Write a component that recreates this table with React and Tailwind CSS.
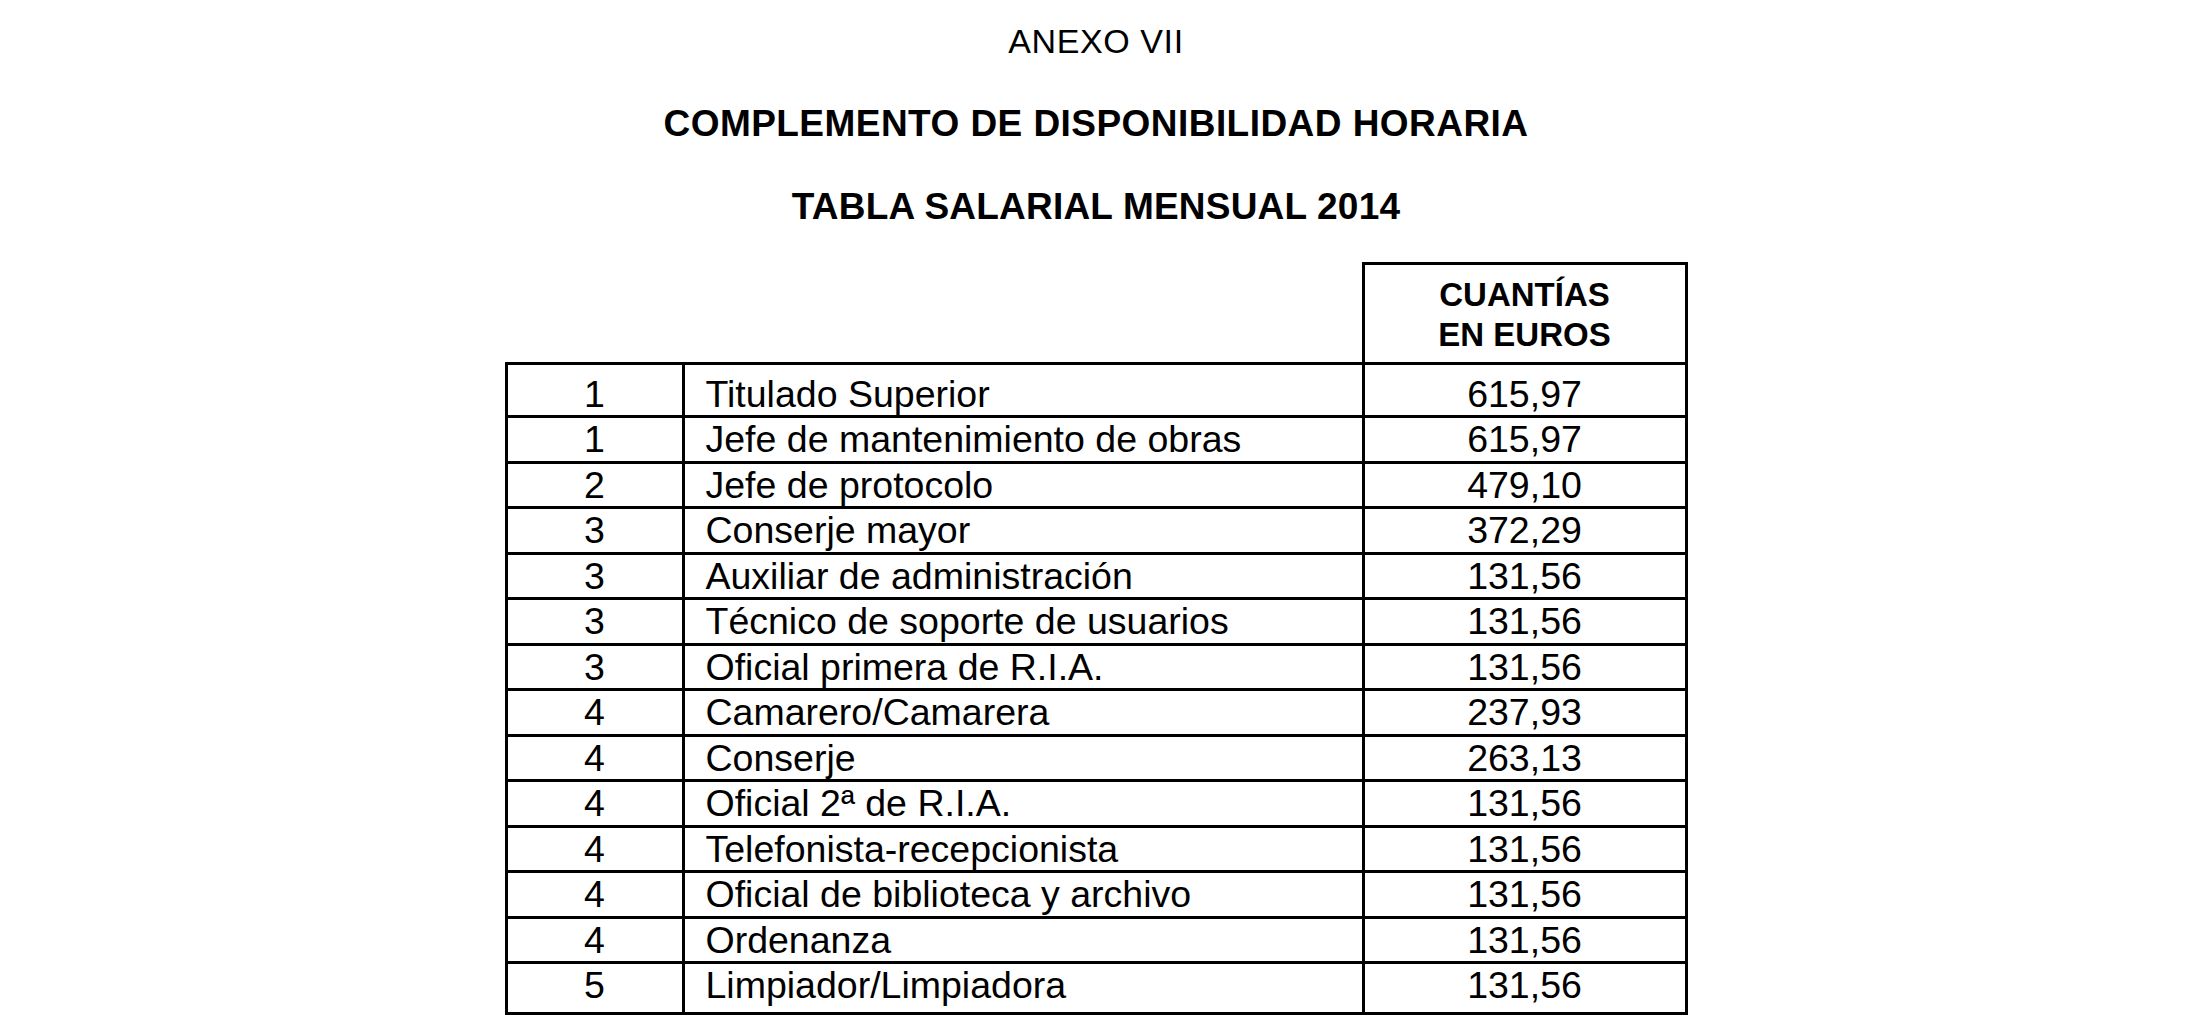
import React from "react";

const rows = [
  ["1", "Titulado Superior", "615,97"],
  ["1", "Jefe de mantenimiento de obras", "615,97"],
  ["2", "Jefe de protocolo", "479,10"],
  ["3", "Conserje mayor", "372,29"],
  ["3", "Auxiliar de administración", "131,56"],
  ["3", "Técnico de soporte de usuarios", "131,56"],
  ["3", "Oficial primera de R.I.A.", "131,56"],
  ["4", "Camarero/Camarera", "237,93"],
  ["4", "Conserje", "263,13"],
  ["4", "Oficial 2ª de R.I.A.", "131,56"],
  ["4", "Telefonista-recepcionista", "131,56"],
  ["4", "Oficial de biblioteca y archivo", "131,56"],
  ["4", "Ordenanza", "131,56"],
  ["5", "Limpiador/Limpiadora", "131,56"],
];

export default function App() {
  return (
    <div className="w-[2192px] h-[1032px] bg-white text-black font-['Liberation_Sans',Arial,sans-serif] overflow-hidden">
      <div className="pt-[24px] flex flex-col items-center">
        <h1 className="text-[34px] leading-[34px] tracking-[0.6px] font-normal">ANEXO VII</h1>
        <h2 className="mt-[46.7px] text-[37px] leading-[37px] tracking-[0.45px] font-bold">
          COMPLEMENTO DE DISPONIBILIDAD HORARIA
        </h2>
        <h2 className="mt-[46px] text-[37px] leading-[37px] tracking-[0.2px] font-bold">
          TABLA SALARIAL MENSUAL 2014
        </h2>
      </div>

      <div className="mx-auto mt-[37.3px] w-[1183px]">
        <div className="flex">
          <div className="w-[857px]" />
          <div className="w-[326px] h-[100px] border-t-[3px] border-x-[3px] border-black pt-[10.5px] flex flex-col items-center text-[33px] leading-[40px] font-bold">
            <span>CUANTÍAS</span>
            <span>EN EUROS</span>
          </div>
        </div>
        <div className="border-[3px] border-black">
          {rows.map(([g, name, v], i) => {
            const first = i === 0;
            const last = i === rows.length - 1;
            return (
              <div
                key={i}
                className={
                  "flex text-[37.5px] leading-[42.5px] " +
                  (last ? "" : "border-b-[3px] border-black ")
                }
              >
                <div className={"w-[174px] text-center " + (first ? "pt-[8px] " : "") + (last ? "pb-[5px]" : "")}>{g}</div>
                <div className={"w-[680px] border-l-[3px] border-black pl-[21px] " + (first ? "pt-[8px] " : "") + (last ? "pb-[5px]" : "")}>{name}</div>
                <div className={"flex-1 border-l-[3px] border-black text-center " + (first ? "pt-[8px] " : "") + (last ? "pb-[5px]" : "")}>{v}</div>
              </div>
            );
          })}
        </div>
      </div>
    </div>
  );
}
